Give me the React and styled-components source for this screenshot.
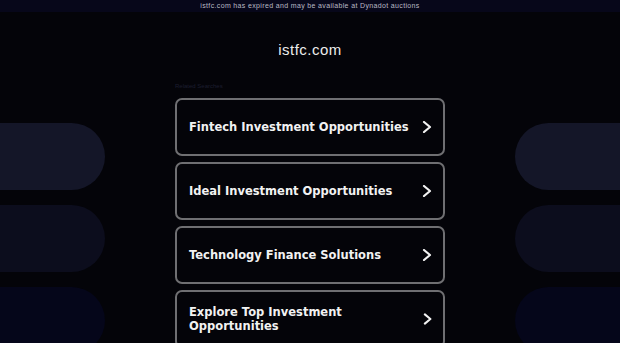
import React from 'react';
import styled, { createGlobalStyle } from 'styled-components';

const GlobalStyle = createGlobalStyle`
  html, body {
    margin: 0;
    padding: 0;
    background: #040409;
    overflow: hidden;
  }
`;

const searches = [
  'Fintech Investment Opportunities',
  'Ideal Investment Opportunities',
  'Technology Finance Solutions',
  'Explore Top Investment Opportunities',
];

const pillShades = ['#141628', '#0c0d1d', '#05061a'];

const Chevron = () => (
  <svg width="10" height="12" viewBox="0 0 10 12" fill="none">
    <polyline
      points="2,1 8,6 2,11"
      stroke="#f2f2f2"
      strokeWidth="2.2"
      strokeLinecap="round"
      strokeLinejoin="round"
    />
  </svg>
);

const App = () => (
  <>
    <GlobalStyle />
    <Page>
      <NoticeBar>istfc.com has expired and may be available at Dynadot auctions</NoticeBar>
      <Layout>
        <PillStack>
          {pillShades.map((shade) => (
            <Pill key={shade} shade={shade} side="left" />
          ))}
        </PillStack>
        <Center>
          <Domain>istfc.com</Domain>
          <Content>
            <RelatedLabel>Related Searches</RelatedLabel>
            <CardList>
              {searches.map((text) => (
                <SearchCard key={text}>
                  <CardText>{text}</CardText>
                  <Chevron />
                </SearchCard>
              ))}
            </CardList>
          </Content>
        </Center>
        <PillStack>
          {pillShades.map((shade) => (
            <Pill key={shade} shade={shade} side="right" />
          ))}
        </PillStack>
      </Layout>
    </Page>
  </>
);

const Page = styled.div`
  width: 620px;
  height: 343px;
  overflow: hidden;
  background: #040409;
  font-family: "DejaVu Sans", Verdana, sans-serif;
`;

const NoticeBar = styled.div`
  height: 12px;
  line-height: 12px;
  background: #07071a;
  color: #b9b9c4;
  font-family: "Liberation Sans", Arial, sans-serif;
  font-size: 7px;
  text-align: center;
  letter-spacing: 0.35px;
`;

const Layout = styled.div`
  display: grid;
  grid-template-columns: 105px 1fr 105px;
`;

const PillStack = styled.div`
  display: flex;
  flex-direction: column;
  gap: 15px;
  padding-top: 111px;
`;

const Pill = styled.div`
  height: 67px;
  background: ${(p) => p.shade};
  border-radius: ${(p) => (p.side === 'left' ? '0 34px 34px 0' : '34px 0 0 34px')};
`;

const Center = styled.div`
  display: flex;
  flex-direction: column;
  align-items: center;
  padding-top: 28px;
`;

const Domain = styled.h1`
  margin: 0;
  font-family: "Liberation Sans", Arial, sans-serif;
  font-weight: normal;
  font-size: 15px;
  line-height: 20px;
  letter-spacing: 0.5px;
  color: #ececec;
`;

const Content = styled.div`
  width: 270px;
  margin-top: 22px;
`;

const RelatedLabel = styled.div`
  font-family: "Liberation Sans", Arial, sans-serif;
  font-size: 6px;
  line-height: 8px;
  color: #1c1e30;
`;

const CardList = styled.div`
  display: flex;
  flex-direction: column;
  gap: 6px;
  margin-top: 8px;
`;

const SearchCard = styled.div`
  box-sizing: border-box;
  min-height: 58px;
  display: flex;
  align-items: center;
  justify-content: space-between;
  gap: 6px;
  padding: 0 11px 0 12px;
  border: 2px solid #6f6f72;
  border-radius: 7px;
  background: #040409;
`;

const CardText = styled.span`
  font-family: "DejaVu Sans", Verdana, sans-serif;
  font-weight: bold;
  font-size: 11.5px;
  line-height: 14px;
  color: #f2f2f2;
  max-width: 230px;
`;

export default App;
